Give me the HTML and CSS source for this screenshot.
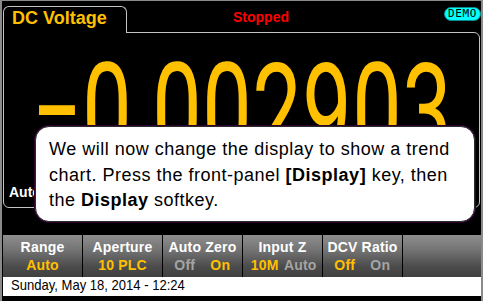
FILE: index.html
```html
<!DOCTYPE html>
<html>
<head>
<meta charset="utf-8">
<link rel="stylesheet" href="styles.css">
</head>
<body>
<div class="screen">
  <div class="header">
    <div class="tab">DC Voltage</div>
    <div class="status">
      <span class="stopped">Stopped</span>
      <span class="demo">DEMO</span>
    </div>
  </div>
  <div class="panel">
    <div class="reading">
      <span class="ch">−</span><span class="ch">0</span><span class="ch dot">.</span><span class="ch">0</span><span class="ch">0</span><span class="ch">2</span><span class="ch">9</span><span class="ch">0</span><span class="ch">3</span>
    </div>
    <div class="range-ind">Auto</div>
  </div>
  <div class="softkeys">
    <div class="key"><div class="lbl">Range</div><div class="val on">Auto</div></div>
    <div class="key"><div class="lbl">Aperture</div><div class="val on">10 PLC</div></div>
    <div class="key"><div class="lbl">Auto Zero</div><div class="val pair"><span class="off">Off</span><span class="on">On</span></div></div>
    <div class="key"><div class="lbl">Input Z</div><div class="val pair"><span class="on">10M</span><span class="off">Auto</span></div></div>
    <div class="key"><div class="lbl">DCV Ratio</div><div class="val pair"><span class="on">Off</span><span class="off">On</span></div></div>
    <div class="key"></div>
  </div>
  <div class="datebar"><span class="date">Sunday, May 18, 2014 - 12:24</span></div>
  <div class="tooltip">We will now change the display to show a trend<br>chart. Press the front-panel <b>[Display]</b> key, then<br>the <b>Display</b> softkey.</div>
</div>
</body>
</html>
```
FILE: styles.css
```css
html, body {
  margin: 0;
  height: 301px;
  overflow: hidden;
  background: #8a8a8a;
}
body {
  font-family: "Liberation Sans", Arial, sans-serif;
}
.screen {
  position: relative;
  box-sizing: border-box;
  margin: 1px 2px 0 2px;
  width: 479px;
  height: 300px;
  padding: 5px 1px 0 1px;
  background: #000;
}
.header {
  display: flex;
  height: 26px;
}
.tab {
  position: relative;
  z-index: 1;
  box-sizing: border-box;
  width: 124px;
  height: 27px;
  margin-bottom: -1px;
  padding: 2px 0 0 8px;
  border: 1px solid #c4c4c4;
  border-bottom: 0;
  border-radius: 6px 6px 0 0;
  background: #000;
  color: #ffc000;
  font-weight: bold;
  font-size: 18px;
  line-height: 18px;
}
.status {
  flex: 1;
  display: flex;
  align-items: flex-start;
}
.stopped {
  margin: 3px 0 0 106px;
  color: #ff0000;
  font-weight: bold;
  font-size: 14px;
  line-height: 16px;
}
.demo {
  box-sizing: border-box;
  margin: 1px -1px 0 auto;
  width: 37px;
  height: 14px;
  border: 1px solid #0a8a8a;
  border-radius: 7px;
  background: #00ffff;
  color: #000;
  font-family: "DejaVu Sans Mono", monospace;
  font-size: 11px;
  line-height: 12px;
  letter-spacing: 0.6px;
  text-align: center;
}
.panel {
  box-sizing: border-box;
  height: 176px;
  border: 1px solid #c4c4c4;
  border-radius: 0 6px 6px 6px;
  display: flex;
  flex-direction: column;
}
.reading {
  display: flex;
  margin-top: 13px;
  padding-left: 28px;
  height: 88px;
  font-family: Roboto, "Liberation Sans", sans-serif;
  font-size: 88px;
  line-height: 88px;
  color: #ffc000;
  transform: scaleY(1.5);
  transform-origin: top left;
}
.ch {
  display: flex;
  justify-content: center;
  width: 50px;
}
.ch.dot {
  width: 20px;
}
.range-ind {
  margin-top: auto;
  padding: 0 0 7px 5px;
  color: #fff;
  font-weight: bold;
  font-size: 14px;
  line-height: 16px;
}
.softkeys {
  margin-top: 27px;
  margin-right: -1px;
  height: 42px;
  display: grid;
  grid-template-columns: repeat(5, 79px) 1fr;
  column-gap: 1px;
  background: #000;
}
.key {
  box-sizing: border-box;
  padding-top: 4px;
  background: linear-gradient(#8e8e8e, #747474 35%, #4c4c4c 75%, #404040);
  text-align: center;
  font-weight: bold;
  font-size: 14px;
  line-height: 16px;
  letter-spacing: 0.2px;
}
.lbl {
  color: #fff;
}
.val {
  margin-top: 2px;
}
.val.pair {
  display: grid;
  grid-template-columns: 1fr 1fr;
  padding: 0 4px;
}
.on {
  color: #ffc000;
}
.off {
  color: #a4a4a4;
}
.datebar {
  margin-right: -1px;
  height: 19px;
  padding-left: 8px;
  background: #fff;
  color: #000;
  font-size: 15px;
  line-height: 16px;
  white-space: nowrap;
}
.date {
  display: inline-block;
  transform: scaleX(0.87);
  transform-origin: left center;
}
.tooltip {
  position: absolute;
  left: 33px;
  top: 125px;
  box-sizing: border-box;
  width: 440px;
  height: 96px;
  padding: 10px 0 0 13px;
  border: 1px solid #2a2a2a;
  border-radius: 14px;
  box-shadow: 0 0 0 1px #2e002e;
  background: #fff;
  color: #000;
  font-size: 18px;
  line-height: 25.5px;
  letter-spacing: 0.5px;
  white-space: nowrap;
}
```
